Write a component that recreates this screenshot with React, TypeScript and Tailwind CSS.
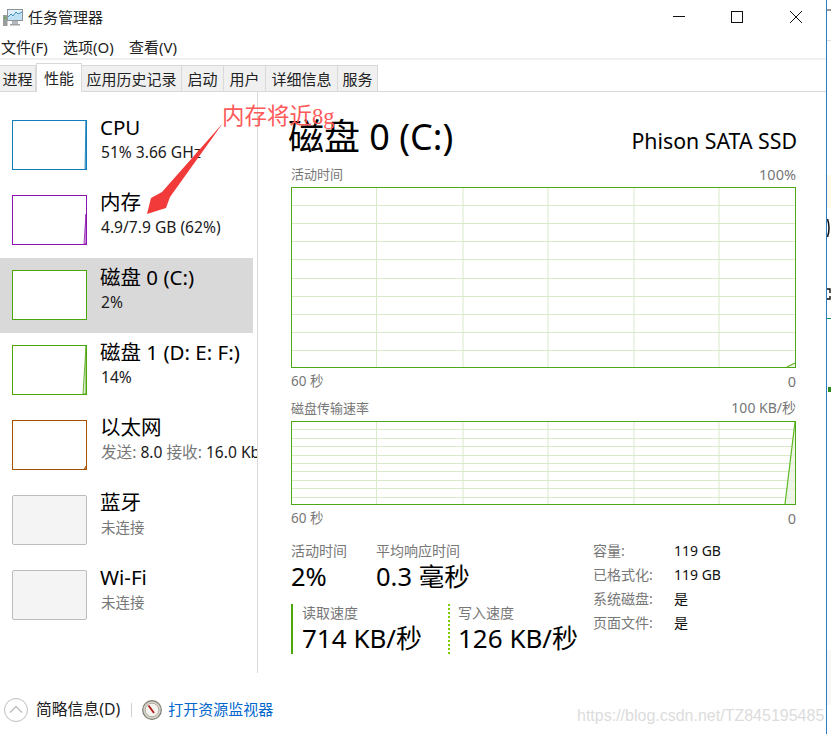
const sans = "font-['Noto_Sans','Noto_Sans_CJK_SC',sans-serif]";

function Grid({ w, h, rows, path, fill }: { w: number; h: number; rows: number; path?: string; fill?: string }) {
  const xs = [85.5, 172, 257, 343, 428];
  const ys = Array.from({ length: rows - 1 }, (_, i) => ((i + 1) * h) / rows);
  return (
    <svg width={w} height={h} className="block">
      {xs.map((x) => (
        <line key={x} x1={x} x2={x} y1={0} y2={h} stroke="#d9eacb" strokeWidth={1} />
      ))}
      {ys.map((y) => (
        <line key={y} x1={0} x2={w} y1={Math.round(y) + 0.5} y2={Math.round(y) + 0.5} stroke="#d9eacb" strokeWidth={1} />
      ))}
      {fill && <path d={fill} fill="#e9f3e0" fillOpacity={0.8} />}
      {path && <path d={path} fill="none" stroke="#5fb820" strokeWidth={1.2} />}
      <rect x={0.5} y={0.5} width={w - 1} height={h - 1} fill="none" stroke="#4ea619" strokeWidth={1} />
    </svg>
  );
}

function Thumb({ border, line, lineBg }: { border: string; line?: string; lineBg?: string }) {
  return (
    <svg width={75} height={50} className="block shrink-0">
      <rect x={0} y={0} width={75} height={50} fill="#ffffff" />
      {lineBg && <path d={lineBg} fill={line} fillOpacity={0.2} />}
      {line && lineBg && <path d={lineBg} fill="none" stroke={line} strokeWidth={0.8} />}
      <rect x={0.5} y={0.5} width={74} height={49} fill="none" stroke={border} />
    </svg>
  );
}

function Item({ title, sub, selected, children }: { title: string; sub: React.ReactNode; selected?: boolean; children: React.ReactNode }) {
  return (
    <div className={`h-[75px] w-[253px] flex pl-3 pt-3 ${selected ? "bg-[#d9d9d9]" : ""}`}>
      {children}
      <div className="ml-[13px] whitespace-nowrap -mt-[6px]">
        <div className="text-[20.5px] leading-[27px] text-black">{title}</div>
        <div className="text-[15.6px] leading-[20px] text-[#1a1a1a] mt-px ml-px">{sub}</div>
      </div>
    </div>
  );
}

function Off({ title }: { title: string }) {
  return (
    <Item title={title} sub={<span className="text-[#777] text-[14.5px]">未连接</span>}>
      <div className="w-[75px] h-[50px] shrink-0 bg-[#f4f4f4] border border-[#bcbcbc] rounded-[2px]" />
    </Item>
  );
}

const tabs = [
  ["进程", "w-[36px]"],
  ["性能", "w-[46px]"],
  ["应用历史记录", "w-[100px]"],
  ["启动", "w-[42px]"],
  ["用户", "w-[42px]"],
  ["详细信息", "w-[72px]"],
  ["服务", "w-[40px]"],
];

export default function App() {
  return (
    <div className={`relative w-[831px] h-[734px] overflow-hidden bg-white text-black ${sans}`}>
      <div className="w-[826px] h-full">
        {/* Title bar */}
        <div className="h-[36px] flex items-center">
          <svg width={20} height={17} viewBox="0 0 20 17" className="ml-[3px] mt-[-1px] shrink-0">
            <rect x={4.5} y={0.5} width={15} height={11} fill="#dff0fa" stroke="#8d9499" />
            <path d="M5 9l3-3 2 2 3-4 2 2 4-2v7H5z" fill="#bfe0f3" />
            <path d="M5 8l3-3 2 2 3-4 2 2 4-2" fill="none" stroke="#3a8fc0" strokeWidth={1} />
            <rect x={9} y={12} width={6} height={3} fill="#b4b8ba" />
            <rect x={7} y={15} width={10} height={1.5} fill="#9ea2a4" />
            <rect x={0} y={6} width={4.5} height={11} fill="#9a9c9c" />
            <rect x={1} y={8} width={2.5} height={1.5} fill="#63b04a" />
          </svg>
          <span className="ml-[5px] text-[15px] leading-5 text-[#222] mt-[-3px]">任务管理器</span>
          <div className="ml-auto flex items-center mt-[-2px]">
            <svg width={14} height={14} className="mr-[44px]"><line x1={1} x2={13} y1={6.5} y2={6.5} stroke="#111" /></svg>
            <svg width={14} height={14} className="mr-[45px]"><rect x={1.5} y={1.5} width={11} height={11} fill="none" stroke="#111" /></svg>
            <svg width={14} height={14} className="mr-[23px]"><path d="M1 1l12 12M13 1L1 13" stroke="#111" strokeWidth={1} /></svg>
          </div>
        </div>
        {/* Menu */}
        <div className="h-[24px] flex items-center text-[15px] leading-5 text-[#222] border-b-2 border-[#f0f0f0]">
          <span className="ml-[1px] w-[62px]">文件(F)</span>
          <span className="w-[66px]">选项(O)</span>
          <span>查看(V)</span>
        </div>
        {/* Tabs */}
        <div className="h-[32px] flex items-end border-b border-[#d9d9d9] relative">
          {tabs.map(([t, w], i) =>
            i === 1 ? (
              <div key={t} className={`${w} h-[29px] bg-white border border-b-0 border-[#d9d9d9] text-[15px] flex items-center justify-center mb-[-1px] relative text-[#222]`}>
                {t}
              </div>
            ) : (
              <div key={t} className={`${w} h-[26px] bg-[#f0f0f0] border-r border-t border-[#d9d9d9] text-[15px] flex items-center justify-center pt-[2px] text-[#222] whitespace-nowrap`}>
                {t}
              </div>
            )
          )}
        </div>
        {/* Body */}
        <div className="flex h-[581px]">
          <div className="w-[258px] border-r border-[#d9d9d9] pt-4 shrink-0 overflow-hidden">
            <Item title="CPU" sub="51% 3.66 GHz">
              <Thumb border="#117dbb" line="#117dbb" lineBg="M73 49L74 1V49Z" />
            </Item>
            <Item title="内存" sub="4.9/7.9 GB (62%)">
              <Thumb border="#8b12ae" line="#8b12ae" lineBg="M72 49L74 19V49Z" />
            </Item>
            <Item selected title="磁盘 0 (C:)" sub="2%">
              <Thumb border="#4da60c" />
            </Item>
            <Item title="磁盘 1 (D: E: F:)" sub="14%">
              <Thumb border="#4da60c" line="#4da60c" lineBg="M71 49L74 1V49Z" />
            </Item>
            <Item
              title="以太网"
              sub={
                <>
                  <span className="text-[#777]">发送:</span> 8.0 <span className="text-[#777]">接收:</span> 16.0 Kb
                </>
              }
            >
              <Thumb border="#a74f01" line="#a74f01" lineBg="M72 49L74 46V49Z" />
            </Item>
            <Off title="蓝牙" />
            <Off title="Wi-Fi" />
          </div>
          <div className="pl-[33px] w-[538px] shrink-0">
            <div className="flex items-end justify-between h-[70px] w-[509px] -ml-[3px]">
              <span className="text-[36px] leading-[50px] whitespace-nowrap">磁盘 0 (C:)</span>
              <span className="text-[21.3px] leading-[27px] mb-2 whitespace-nowrap">Phison SATA SSD</span>
            </div>
            <div className="w-[505px] flex justify-between items-center text-[13px] leading-[18px] text-[#777] mt-[3px]">
              <span>活动时间</span>
              <span className="text-[14.5px]">100%</span>
            </div>
            <div className="mt-[4px]">
              <Grid w={505} h={181} rows={10} path="M496 180L504 176" fill="M496 180L504 176V180Z" />
            </div>
            <div className="w-[505px] flex justify-between items-center text-[13.5px] leading-[18px] text-[#777] mt-[4px]">
              <span>60 秒</span>
              <span className="text-[14.5px]">0</span>
            </div>
            <div className="w-[505px] flex justify-between items-center text-[13px] leading-[18px] text-[#777] mt-[9px]">
              <span>磁盘传输速率</span>
              <span className="text-[14px]">100 KB/秒</span>
            </div>
            <div className="mt-[4px]">
              <Grid w={505} h={84} rows={10} path="M494 83L504 1" fill="M494 83L504 1V83Z" />
            </div>
            <div className="w-[505px] flex justify-between items-center text-[13.5px] leading-[18px] text-[#777] mt-[4px]">
              <span>60 秒</span>
              <span className="text-[14.5px]">0</span>
            </div>
            <div className="flex mt-[14px] w-[505px]">
              <div className="w-[302px] shrink-0">
                <div className="flex">
                  <div className="w-[85px]">
                    <div className="text-[14px] leading-[19px] text-[#777]">活动时间</div>
                    <div className="text-[25.5px] leading-[33px]">2%</div>
                  </div>
                  <div>
                    <div className="text-[14px] leading-[19px] text-[#777]">平均响应时间</div>
                    <div className="text-[25.5px] leading-[33px] whitespace-nowrap">0.3 毫秒</div>
                  </div>
                </div>
                <div className="flex mt-[11px]">
                  <div className="w-[157px] h-[50px] border-l-2 border-[#4da60c] pl-[9px]">
                    <div className="text-[14px] leading-[18px] text-[#777]">读取速度</div>
                    <div className="text-[26px] leading-[33px] whitespace-nowrap">714 KB/秒</div>
                  </div>
                  <div className="h-[50px] border-l-2 border-dotted border-[#7fd000] pl-[8px]">
                    <div className="text-[14px] leading-[18px] text-[#777]">写入速度</div>
                    <div className="text-[26px] leading-[33px] whitespace-nowrap">126 KB/秒</div>
                  </div>
                </div>
              </div>
              <div className="grid grid-cols-[81px_auto] auto-rows-[24px] text-[14px] leading-[24px] content-start text-[#111] -mt-[2px]">
                <span className="text-[#777]">容量:</span>
                <span>119 GB</span>
                <span className="text-[#777]">已格式化:</span>
                <span>119 GB</span>
                <span className="text-[#777]">系统磁盘:</span>
                <span>是</span>
                <span className="text-[#777]">页面文件:</span>
                <span>是</span>
              </div>
            </div>
          </div>
        </div>
        {/* Footer */}
        <div className="flex items-center h-[61px] pt-3">
          <svg width={24} height={24} className="ml-1 shrink-0" viewBox="0 0 24 24">
            <circle cx={12} cy={12} r={11.5} fill="none" stroke="#bdbdbd" />
            <path d="M6 14.5L12 8.5L18 14.5" fill="none" stroke="#bdbdbd" strokeWidth={1.3} />
          </svg>
          <span className="ml-2 text-[15.8px] text-[#222] whitespace-nowrap">简略信息(D)</span>
          <div className="ml-[11px] w-px h-[14px] bg-[#cfcfcf]" />
          <svg width={20} height={20} className="ml-[10px] shrink-0" viewBox="0 0 20 20">
            <circle cx={10} cy={10} r={9.3} fill="#d8d5cc" stroke="#7d7d72" strokeWidth={1.2} />
            <circle cx={10} cy={10} r={6.8} fill="#f5f3ee" stroke="#9a968a" strokeWidth={0.7} />
            <path d="M6.5 5.5L12 13" stroke="#b01818" strokeWidth={1.8} />
          </svg>
          <span className="ml-[6px] text-[15px] text-[#0066cc] whitespace-nowrap">打开资源监视器</span>
        </div>
      </div>

      {/* Neighbouring window edge */}
      <div className="absolute top-0 bottom-0 left-[826px] w-px bg-[#2b7cc7]" />
      <div className="absolute left-[827px] top-[9px] w-[4px] h-[2px] bg-[#9a9a9a]" />
      <div className="absolute left-[827px] top-[40px] w-[4px] h-px bg-[#dddddd]" />
      <div className="absolute left-[827px] top-[175px] w-[4px] h-[33px] bg-[#fff9ea]" />
      <svg className="absolute left-[827px] top-[218px]" width={4} height={20}>
        <path d="M0.5 1Q3.5 10 0.5 19" fill="none" stroke="#111" strokeWidth={1.5} />
      </svg>
      <svg className="absolute left-[827px] top-[288px]" width={4} height={14}>
        <path d="M0 1h3v4M3 8v3H0" fill="none" stroke="#111" strokeWidth={1.4} />
      </svg>
      <div className="absolute left-[827px] top-[318px] w-[4px] h-px bg-[#0a9a60]" />
      <div className="absolute left-[828px] top-[387px] w-[3px] h-[5px] bg-[#2d8a1a]" />
      <div className="absolute left-[827px] top-[650px] w-[4px] h-[55px] bg-[#f7f7f7]" />

      {/* Annotation */}
      <div className="absolute left-[222px] top-[103px] text-[22.5px] leading-[27px] text-[#ff5a5a] font-['Liberation_Serif','Noto_Sans_CJK_SC',serif] whitespace-nowrap">
        内存将近8g
      </div>
      <svg className="absolute left-[140px] top-[120px]" width={90} height={100} viewBox="0 0 90 100">
        <path d="M83 3L30 77L26 88L7 94L11 78L22 72Z" fill="#f33a3a" />
      </svg>

      {/* Watermark */}
      <div className="absolute left-[577px] top-[706px] text-[16px] leading-5 text-[#dcdcdc] font-['Liberation_Sans',sans-serif] whitespace-nowrap">
        https://blog.csdn.net/TZ845195485
      </div>
    </div>
  );
}
